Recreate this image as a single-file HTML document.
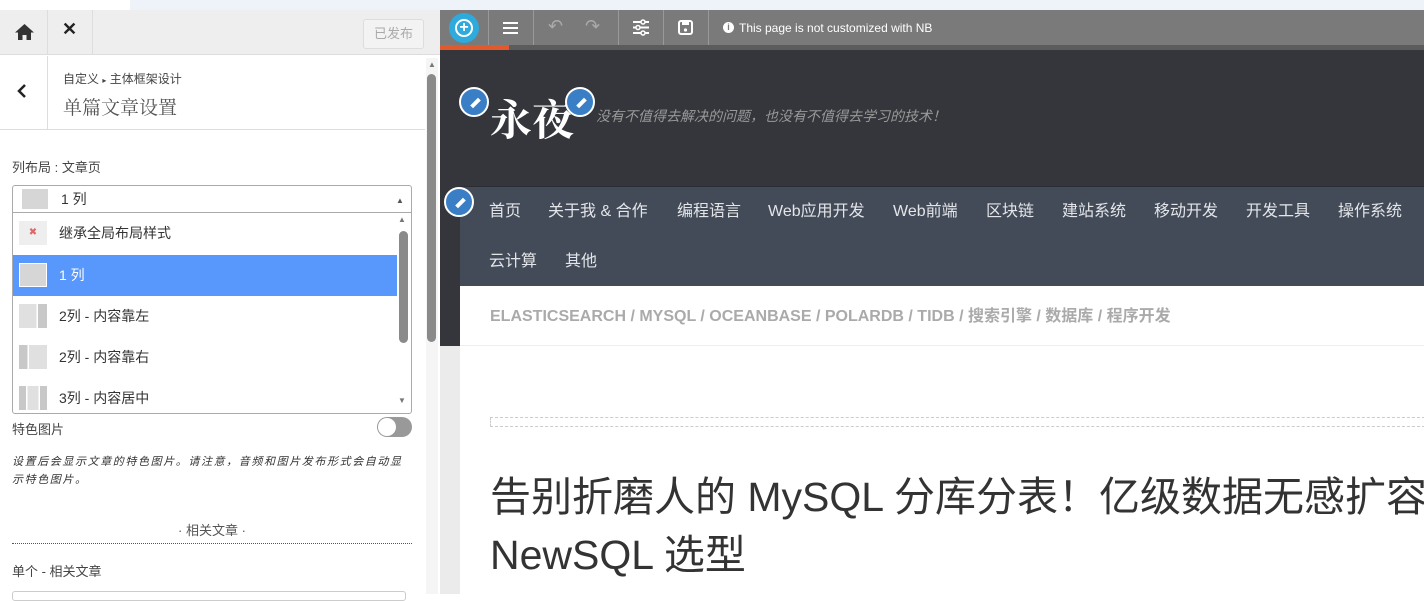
<!DOCTYPE html>
<html><head><meta charset="utf-8"><style>
*{margin:0;padding:0;box-sizing:border-box}
body{width:1424px;height:594px;overflow:hidden;background:#fff;font-family:"Liberation Sans","Noto Sans CJK SC",sans-serif;position:relative;color:#333}
.a{position:absolute}
.pen{position:absolute;width:30px;height:30px;border-radius:50%;background:#3a7fc6;border:2px solid #fff}
.pen:after{content:"";position:absolute;left:9px;top:12px;width:11px;height:4px;background:#fff;transform:rotate(-45deg)}
.nav span{position:absolute;font-size:16px;color:#e3e5e8}
.opt{position:absolute;left:13px;width:384px;height:41px;font-size:14px;color:#333}
.opt i{position:absolute;left:6px;top:8px;width:28px;height:24px}
.opt b{position:absolute;left:46px;top:10px;font-weight:normal}
</style></head><body>
<div class="a" style="left:0;top:0;width:1424px;height:10px;background:#eef3f9"></div>
<div class="a" style="left:0;top:0;width:130px;height:10px;background:#fff"></div>
<div class="a" style="left:0;top:10px;width:440px;height:584px;background:#fff"></div>
<div class="a" style="left:0;top:10px;width:440px;height:45px;background:#eeeeee;border-bottom:1px solid #ddd"></div>
<div class="a" style="left:47px;top:10px;width:1px;height:45px;background:#ddd"></div>
<div class="a" style="left:92px;top:10px;width:1px;height:45px;background:#ddd"></div>
<svg class="a" style="left:14px;top:23px" width="21" height="18" viewBox="0 0 21 18"><path d="M10.5 1 L1 9.5 H4 V17 H8.5 V12 H12.5 V17 H17 V9.5 H20 Z" fill="#333"/></svg>
<div class="a" style="left:62px;top:19px;font-size:18px;font-weight:bold;color:#222">✕</div>
<div class="a" style="left:363px;top:19px;width:61px;height:30px;border:1px solid #ddd;border-radius:3px;background:#f3f3f3;color:#aaa;font-size:13px;text-align:center;line-height:28px">已发布</div>
<div class="a" style="left:0;top:129px;width:425px;height:1px;background:#ddd"></div>
<div class="a" style="left:47px;top:56px;width:1px;height:73px;background:#ddd"></div>
<svg class="a" style="left:17px;top:84px" width="10" height="14"><path d="M8 1L2 7L8 13" stroke="#222" stroke-width="2.5" fill="none"/></svg>
<div class="a" style="left:63px;top:70px;font-size:12px;color:#444">自定义 <span style="font-size:8px">▸</span> 主体框架设计</div>
<div class="a" style="left:63px;top:93px;font-size:19px;color:#555;font-family:'Noto Serif CJK SC',serif">单篇文章设置</div>
<div class="a" style="left:426px;top:58px;width:12px;height:536px;background:#f5f5f5"></div>
<div class="a" style="left:428px;top:60px;font-size:8px;color:#777">▲</div>
<div class="a" style="left:427px;top:74px;width:9px;height:268px;background:#8a8a8a;border-radius:5px"></div>
<div class="a" style="left:12px;top:157px;font-size:13px;color:#444">列布局 : 文章页</div>
<div class="a" style="left:12px;top:185px;width:400px;height:229px;border:1px solid #aaa;border-radius:3px;background:#fff"></div>
<div class="a" style="left:13px;top:212px;width:398px;height:1px;background:#aaa"></div>
<div class="a" style="left:22px;top:189px;width:26px;height:20px;background:#d6d6d6"></div>
<div class="a" style="left:61px;top:189px;font-size:14px">1 列</div>
<div class="a" style="left:396px;top:196px;font-size:8px;color:#555">▲</div>
<div class="opt" style="top:213px"><i style="background:#eee;color:#d66;font-size:10px;text-align:center;line-height:24px;font-style:normal">✖</i><b>继承全局布局样式</b></div>
<div class="opt" style="top:255px;background:#5897fb;color:#fff"><i style="background:#d6d6d6;border:1px solid #fff"></i><b>1 列</b></div>
<div class="opt" style="top:296px"><i style="background:linear-gradient(90deg,#e0e0e0 0 62%,#fff 62% 68%,#c8c8c8 68%)"></i><b>2列 - 内容靠左</b></div>
<div class="opt" style="top:337px"><i style="background:linear-gradient(90deg,#c8c8c8 0 30%,#fff 30% 36%,#e0e0e0 36%)"></i><b>2列 - 内容靠右</b></div>
<div class="opt" style="top:378px;height:34px"><i style="background:linear-gradient(90deg,#c8c8c8 0 25%,#fff 25% 30%,#e0e0e0 30% 70%,#fff 70% 75%,#c8c8c8 75%)"></i><b>3列 - 内容居中</b></div>
<div class="a" style="left:398px;top:215px;font-size:8px;color:#777">▲</div>
<div class="a" style="left:399px;top:231px;width:9px;height:112px;background:#8a8a8a;border-radius:5px"></div>
<div class="a" style="left:398px;top:396px;font-size:8px;color:#777">▼</div>
<div class="a" style="left:12px;top:419px;font-size:13px;color:#444">特色图片</div>
<div class="a" style="left:377px;top:417px;width:35px;height:20px;border-radius:10px;background:#999"></div>
<div class="a" style="left:378px;top:418px;width:18px;height:18px;border-radius:50%;background:#fff"></div>
<div class="a" style="left:12px;top:453px;width:400px;font-size:11px;letter-spacing:1.6px;font-style:italic;color:#333;line-height:18px">设置后会显示文章的特色图片。请注意，音频和图片发布形式会自动显示特色图片。</div>
<div class="a" style="left:12px;top:520px;width:400px;text-align:center;font-size:13px;color:#555">· 相关文章 ·</div>
<div class="a" style="left:12px;top:543px;width:400px;border-top:1px dotted #555"></div>
<div class="a" style="left:12px;top:561px;font-size:13px;color:#444">单个 - 相关文章</div>
<div class="a" style="left:12px;top:591px;width:394px;height:10px;border:1px solid #ccc;border-radius:3px"></div>
<div class="a" style="left:440px;top:10px;width:984px;height:35px;background:#7a7a7a"></div>
<div class="a" style="left:440px;top:45px;width:984px;height:5px;background:#5c5c5f"></div>
<div class="a" style="left:440px;top:45px;width:69px;height:5px;background:#e25a2b"></div>
<div class="a" style="left:449px;top:13px;width:30px;height:30px;border-radius:50%;background:#2eaadc"></div>
<div class="a" style="left:455px;top:19px;width:18px;height:18px;border-radius:50%;border:2px solid #fff;color:#fff;font-size:16px;line-height:13px;text-align:center;font-weight:bold">+</div>
<div class="a" style="left:488px;top:10px;width:1px;height:35px;background:#999"></div>
<div class="a" style="left:533px;top:10px;width:1px;height:35px;background:#999"></div>
<div class="a" style="left:618px;top:10px;width:1px;height:35px;background:#999"></div>
<div class="a" style="left:663px;top:10px;width:1px;height:35px;background:#999"></div>
<div class="a" style="left:708px;top:10px;width:1px;height:35px;background:#999"></div>
<div class="a" style="left:503px;top:22px;width:15px;height:2px;background:#fff;box-shadow:0 5px 0 #fff,0 10px 0 #fff"></div>
<div class="a" style="left:548px;top:16px;font-size:18px;color:#aaa">↶</div>
<div class="a" style="left:585px;top:16px;font-size:18px;color:#aaa">↷</div>
<svg class="a" style="left:632px;top:19px" width="18" height="17"><path d="M1 3H17M1 8.5H17M1 14H17" stroke="#fff" stroke-width="2"/><circle cx="11" cy="3" r="2" fill="#7a7a7a" stroke="#fff" stroke-width="1.5"/><circle cx="6" cy="8.5" r="2" fill="#7a7a7a" stroke="#fff" stroke-width="1.5"/><circle cx="11" cy="14" r="2" fill="#7a7a7a" stroke="#fff" stroke-width="1.5"/></svg>
<svg class="a" style="left:678px;top:20px" width="15" height="15"><rect x="1" y="1" width="13" height="13" rx="2" fill="none" stroke="#fff" stroke-width="2"/><rect x="4" y="1" width="7" height="4" fill="#fff"/><circle cx="7.5" cy="10" r="1.6" fill="#fff"/></svg>
<div class="a" style="left:723px;top:22px;width:11px;height:11px;border-radius:50%;background:#fff;color:#7a7a7a;font-size:9px;line-height:11px;text-align:center;font-weight:bold">i</div>
<div class="a" style="left:739px;top:21px;font-size:12px;color:#fff">This page is not customized with NB</div>
<div class="a" style="left:440px;top:50px;width:984px;height:136px;background:#34363b"></div>
<div class="a" style="left:440px;top:186px;width:20px;height:160px;background:#34363b"></div>
<div class="a" style="left:440px;top:346px;width:20px;height:248px;background:#ebebeb"></div>
<div class="a" style="left:490px;top:88px;font-size:42px;color:#fff;font-family:'Noto Serif CJK SC',serif;font-weight:bold">永夜</div>
<div class="a" style="left:596px;top:106px;font-size:14px;color:#999;font-style:italic">没有不值得去解决的问题，也没有不值得去学习的技术！</div>
<div class="pen" style="left:459px;top:87px"></div>
<div class="pen" style="left:565px;top:87px"></div>
<div class="a" style="left:460px;top:186px;width:964px;height:100px;background:#434b59;border-top:1px solid #2a2d33"></div>
<div class="nav">
<span style="left:489px;top:197px">首页</span><span style="left:548px;top:197px">关于我 &amp; 合作</span><span style="left:677px;top:197px">编程语言</span><span style="left:768px;top:197px">Web应用开发</span><span style="left:893px;top:197px">Web前端</span><span style="left:986px;top:197px">区块链</span><span style="left:1062px;top:197px">建站系统</span><span style="left:1154px;top:197px">移动开发</span><span style="left:1246px;top:197px">开发工具</span><span style="left:1338px;top:197px">操作系统</span>
<span style="left:489px;top:247px">云计算</span><span style="left:565px;top:247px">其他</span></div>
<div class="pen" style="left:444px;top:187px"></div>
<div class="a" style="left:490px;top:302px;font-size:16px;font-weight:bold;color:#aaa">ELASTICSEARCH / MYSQL / OCEANBASE / POLARDB / TIDB / 搜索引擎 / 数据库 / 程序开发</div>
<div class="a" style="left:460px;top:345px;width:964px;height:1px;background:#eee"></div>
<div class="a" style="left:490px;top:417px;width:940px;height:10px;border:1px dashed #ccc"></div>
<div class="a" style="left:490px;top:468px;font-size:41px;color:#333;line-height:58px;white-space:nowrap">告别折磨人的 MySQL 分库分表！亿级数据无感扩容<br>NewSQL 选型</div>
</body></html>
